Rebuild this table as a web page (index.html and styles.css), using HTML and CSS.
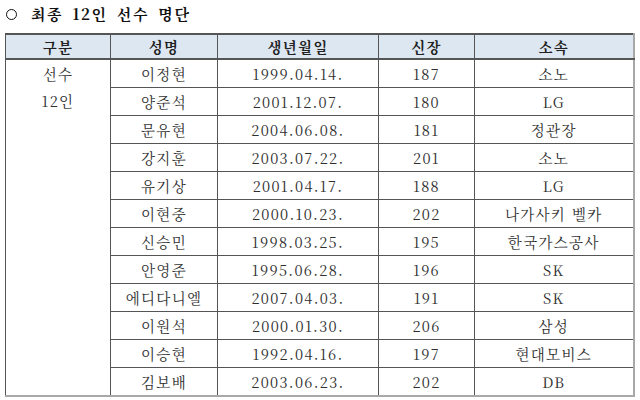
FILE: index.html
```html
<!DOCTYPE html>
<html lang="ko">
<head>
<meta charset="utf-8">
<link rel="stylesheet" href="styles.css">
</head>
<body>
<div class="page">
  <h1 class="title"><span class="bullet"></span><span class="title-text">최종 12인 선수 명단</span></h1>
  <table class="roster">
    <colgroup>
      <col class="c1"><col class="c2"><col class="c3"><col class="c4"><col class="c5">
    </colgroup>
    <thead>
      <tr><th>구분</th><th>성명</th><th>생년월일</th><th>신장</th><th>소속</th></tr>
    </thead>
    <tbody>
      <tr><td class="group" rowspan="12"><div>선수</div><div>12인</div></td><td>이정현</td><td>1999.04.14.</td><td>187</td><td>소노</td></tr>
      <tr><td>양준석</td><td>2001.12.07.</td><td>180</td><td>LG</td></tr>
      <tr><td>문유현</td><td>2004.06.08.</td><td>181</td><td>정관장</td></tr>
      <tr><td>강지훈</td><td>2003.07.22.</td><td>201</td><td>소노</td></tr>
      <tr><td>유기상</td><td>2001.04.17.</td><td>188</td><td>LG</td></tr>
      <tr><td>이현중</td><td>2000.10.23.</td><td>202</td><td>나가사키 벨카</td></tr>
      <tr><td>신승민</td><td>1998.03.25.</td><td>195</td><td>한국가스공사</td></tr>
      <tr><td>안영준</td><td>1995.06.28.</td><td>196</td><td>SK</td></tr>
      <tr><td>에디다니엘</td><td>2007.04.03.</td><td>191</td><td>SK</td></tr>
      <tr><td>이원석</td><td>2000.01.30.</td><td>206</td><td>삼성</td></tr>
      <tr><td>이승현</td><td>1992.04.16.</td><td>197</td><td>현대모비스</td></tr>
      <tr><td>김보배</td><td>2003.06.23.</td><td>202</td><td>DB</td></tr>
    </tbody>
  </table>
</div>
</body>
</html>
```
FILE: styles.css
```css
html, body {
  margin: 0;
  padding: 0;
  background: #ffffff;
}
body {
  font-family: "Noto Serif CJK KR", "Liberation Serif", "Noto Sans CJK KR", serif;
  color: #2e2e2e;
}
.page {
  padding: 4px 0 0 5px;
  width: 629px;
}
.title {
  margin: 0 0 9px 0;
  font-size: 15px;
  line-height: 20px;
  font-weight: bold;
  color: #111;
  display: flex;
  align-items: center;
  gap: 14px;
}
.title-text {
  letter-spacing: 1.6px;
  word-spacing: 3px;
}
.bullet {
  width: 9px;
  height: 9px;
  border: 1.8px solid #111;
  border-radius: 50%;
  margin-left: 1px;
}
.roster {
  border-collapse: collapse;
  width: 628px;
  table-layout: fixed;
  font-size: 14.5px;
  border-top: 2px solid #555;
  border-left: 1.5px solid #444;
  border-right: 2px solid #a8a8a8;
  border-bottom: 2px solid #a8a8a8;
}
.c1 { width: 105px; }
.c2 { width: 107px; }
.c3 { width: 161px; }
.c4 { width: 96px; }
.c5 { width: 159px; }
.roster th {
  background: #dde7f2;
  font-weight: bold;
  height: 23px;
  padding: 0;
  border: 1px solid #555;
  border-bottom: 2px solid #555;
  text-align: center;
  color: #222;
  line-height: 23px;
  letter-spacing: 1.2px;
}
.roster td {
  height: 27px;
  padding: 0;
  border: 1px solid #555;
  text-align: center;
  line-height: 27px;
  letter-spacing: 1.3px;
}
.roster td.group {
  vertical-align: top;
}
.roster td.group div {
  height: 27px;
  line-height: 27px;
}
.roster tr:last-child td { border-bottom: 0; }
.roster th:last-child, .roster td:last-child { border-right: 0; }
```
